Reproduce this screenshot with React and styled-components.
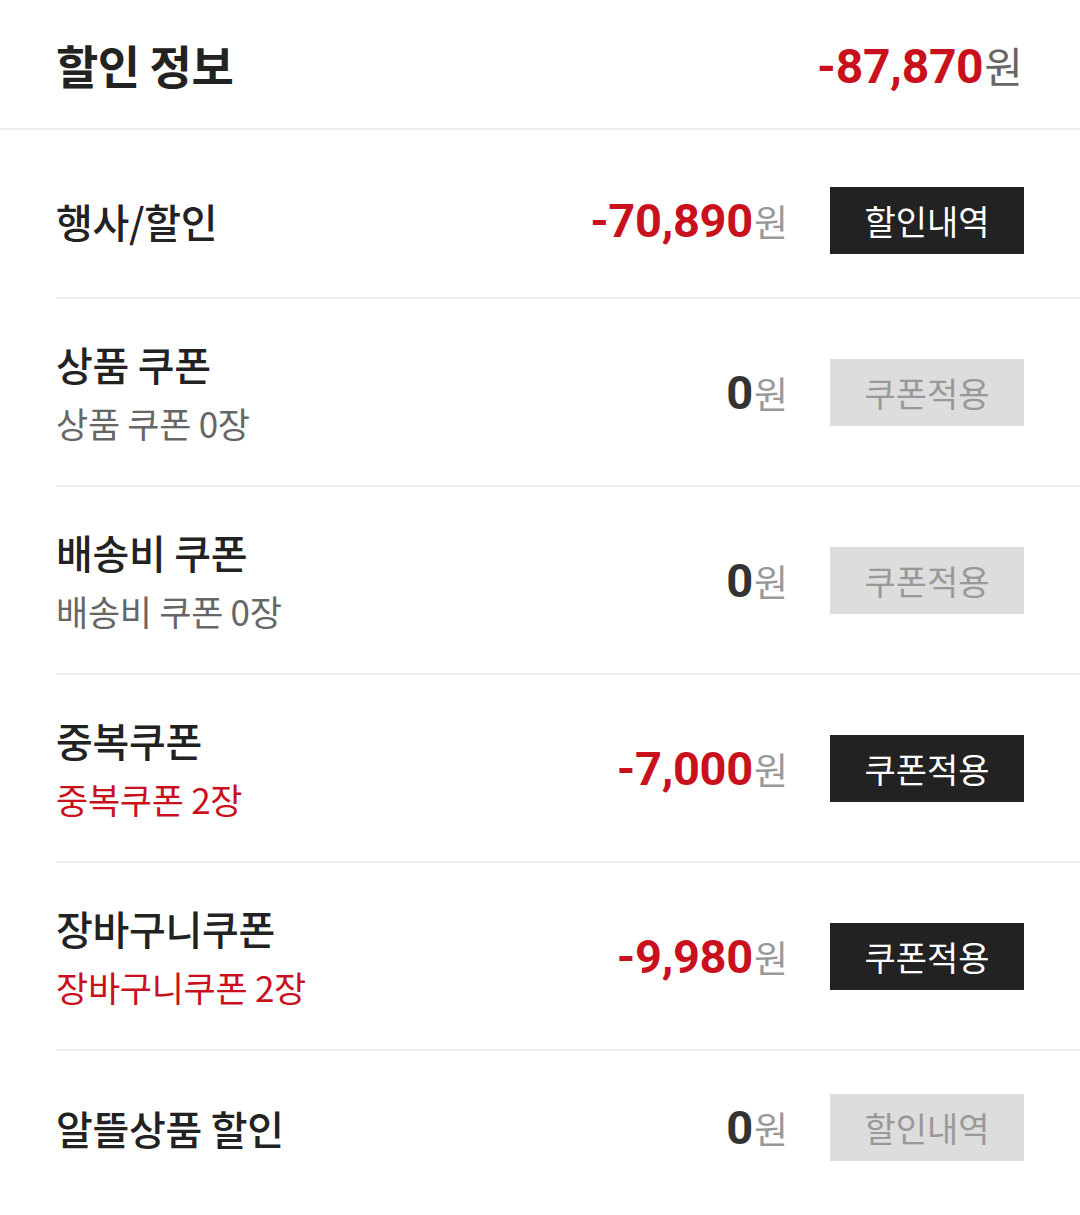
import React from 'react';
import styled, { createGlobalStyle } from 'styled-components';

const GlobalStyle = createGlobalStyle`
  html, body {
    margin: 0;
    padding: 0;
    background: #fff;
    font-family: "Noto Sans CJK KR", "Noto Sans", sans-serif;
    color: #222;
  }
`;

const RED = '#c9111e';

const Page = styled.div`
  width: 1080px;
  background: #fff;
`;

const Header = styled.div`
  display: flex;
  align-items: center;
  justify-content: space-between;
  height: 128px;
  padding: 0 57px 0 56px;
  border-bottom: 2px solid #eeeeee;
`;

const HeaderTitle = styled.h2`
  margin: 0;
  font-size: 46px;
  font-weight: 700;
  color: #222;
  letter-spacing: -0.5px;
`;

const Amount = styled.div`
  display: flex;
  align-items: baseline;
  white-space: nowrap;
`;

const Digits = styled.span`
  font-family: Roboto, "Noto Sans CJK KR", sans-serif;
  font-weight: 700;
  font-size: ${p => (p.$big ? 48 : 47)}px;
  color: ${p => (p.$red ? RED : '#333')};
  letter-spacing: -0.3px;
`;

const Won = styled.span`
  font-size: ${p => (p.$big ? 42 : 37)}px;
  font-weight: 400;
  color: ${p => (p.$big ? '#666' : '#999')};
  margin-left: 1px;
`;

const List = styled.div`
  padding-top: 14px;
`;

const Row = styled.div`
  display: flex;
  align-items: center;
  margin-left: 56px;
  padding: 43px 56px 43px 0;
  border-bottom: ${p => (p.$last ? 'none' : '2px solid #eeeeee')};
`;

const Labels = styled.div`
  flex: 1;
  display: flex;
  flex-direction: column;
`;

const Title = styled.div`
  font-size: 40px;
  line-height: 44px;
  font-weight: 500;
  color: #222;
  letter-spacing: -0.3px;
`;

const Sub = styled.div`
  margin-top: 18px;
  font-size: 35px;
  line-height: 38px;
  font-weight: 400;
  color: ${p => (p.$red ? RED : '#666')};
  letter-spacing: -0.3px;
`;

const Button = styled.button`
  margin-left: 42px;
  width: 194px;
  height: 67px;
  border: none;
  border-radius: 0;
  padding: 0;
  font-family: "Noto Sans CJK KR", sans-serif;
  font-size: 34px;
  font-weight: 400;
  background: ${p => (p.$active ? '#222222' : '#dddddd')};
  color: ${p => (p.$active ? '#ffffff' : '#999999')};
  cursor: ${p => (p.$active ? 'pointer' : 'default')};
`;

const rows = [
  { title: '행사/할인', amount: '-70,890', red: true, button: '할인내역', active: true },
  { title: '상품 쿠폰', sub: '상품 쿠폰 0장', amount: '0', button: '쿠폰적용' },
  { title: '배송비 쿠폰', sub: '배송비 쿠폰 0장', amount: '0', button: '쿠폰적용' },
  { title: '중복쿠폰', sub: '중복쿠폰 2장', subRed: true, amount: '-7,000', red: true, button: '쿠폰적용', active: true },
  { title: '장바구니쿠폰', sub: '장바구니쿠폰 2장', subRed: true, amount: '-9,980', red: true, button: '쿠폰적용', active: true },
  { title: '알뜰상품 할인', amount: '0', button: '할인내역' },
];

export default function App() {
  return (
    <Page>
      <GlobalStyle />
      <Header>
        <HeaderTitle>할인 정보</HeaderTitle>
        <Amount>
          <Digits $big $red>-87,870</Digits>
          <Won $big>원</Won>
        </Amount>
      </Header>
      <List>
        {rows.map((r, i) => (
          <Row key={r.title} $last={i === rows.length - 1}>
            <Labels>
              <Title>{r.title}</Title>
              {r.sub && <Sub $red={r.subRed}>{r.sub}</Sub>}
            </Labels>
            <Amount>
              <Digits $red={r.red}>{r.amount}</Digits>
              <Won>원</Won>
            </Amount>
            <Button $active={r.active}>{r.button}</Button>
          </Row>
        ))}
      </List>
    </Page>
  );
}
